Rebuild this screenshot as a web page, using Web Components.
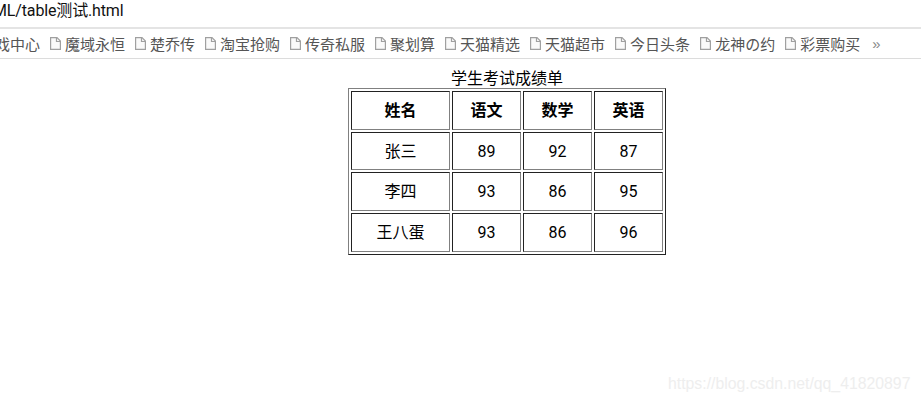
<!DOCTYPE html>
<html lang="zh">
<head>
<meta charset="utf-8">
<title>table测试</title>
<style>
  html, body { margin: 0; height: 100%; background: #fff; overflow: hidden; }
  body { position: relative; font-family: Roboto, "Noto Sans CJK SC", sans-serif; }
</style>
</head>
<body>
<address-bar>ML/table测试.html</address-bar>
<bookmark-bar>
  <bookmark-item>魔域永恒</bookmark-item>
  <bookmark-item>楚乔传</bookmark-item>
  <bookmark-item>淘宝抢购</bookmark-item>
  <bookmark-item>传奇私服</bookmark-item>
  <bookmark-item>聚划算</bookmark-item>
  <bookmark-item>天猫精选</bookmark-item>
  <bookmark-item>天猫超市</bookmark-item>
  <bookmark-item>今日头条</bookmark-item>
  <bookmark-item>龙神の约</bookmark-item>
  <bookmark-item>彩票购买</bookmark-item>
</bookmark-bar>
<score-table></score-table>
<water-mark>https://blog.csdn.net/qq_41820897</water-mark>

<script>
class AddressBar extends HTMLElement {
  constructor() {
    super();
    this.attachShadow({mode: 'open'}).innerHTML = `
  <style>
    :host {
      display: block;
      box-sizing: border-box;
      height: 29px;
      border-bottom: 2px solid #e4e4e4;
      overflow: hidden;
      white-space: nowrap;
      color: #111;
      letter-spacing: -.15px;
      font: 16px/19px Roboto, "Noto Sans CJK SC", sans-serif;
    }
    div { margin: 1px 0 0 -7px; }
  </style>
  <div><slot></slot></div>`;
  }
}

class BookmarkBar extends HTMLElement {
  constructor() {
    super();
    this.attachShadow({mode: 'open'}).innerHTML = `
  <style>
    :host {
      display: flex;
      box-sizing: border-box;
      height: 30px;
      align-items: center;
      gap: 10px;
      border-bottom: 1px solid #dcdcdc;
      overflow: hidden;
      white-space: nowrap;
      color: #555;
      font: 15px/20px "Noto Sans CJK SC", sans-serif;
    }
    .clipped { margin-left: -20px; width: 60px; flex: none; }
    .more { color: #888; margin-left: 2px; font-family: "Liberation Sans", sans-serif; }
  </style>
  <span class="clipped">游戏中心</span>
  <slot></slot>
  <span class="more">»</span>`;
  }
}

class BookmarkItem extends HTMLElement {
  constructor() {
    super();
    this.attachShadow({mode: 'open'}).innerHTML = `
  <style>
    :host { display: inline-flex; align-items: center; gap: 4px; flex: none; }
    svg { width: 11px; height: 13px; flex: none; }
  </style>
  <svg viewBox="0 0 11 13" fill="none" stroke="#a0a0a0" stroke-width="1.200">
    <path d="M.6.6h6.400l3.400 3.400v8.400h-9.800z" fill="#fafafa"/>
    <path d="M6.500.6v3.900h3.900"/>
  </svg>
  <slot></slot>`;
  }
}

class ScoreTable extends HTMLElement {
  constructor() {
    super();
    const head = ['姓名', '语文', '数学', '英语'];
    const rows = [
      ['张三', 89, 92, 87],
      ['李四', 93, 86, 95],
      ['王八蛋', 93, 86, 96]
    ];
    this.attachShadow({mode: 'open'}).innerHTML = `
  <style>
    :host {
      display: flex;
      justify-content: center;
      padding: 11px 0 0 93px;
      color: #000;
      font: 16px/18px Roboto, "Noto Sans CJK SC", sans-serif;
    }
    table { border: 1px solid; border-color: #808080 #222 #222 #808080; border-spacing: 2px; border-collapse: separate; }
    caption { line-height: 18px; }
    th, td {
      border: 1px solid;
      border-color: #222 #808080 #808080 #222;
      padding: 0;
      height: 37px;
      text-align: center;
      width: 67px;
    }
    .name { width: 97px; }
    .short td { height: 35px; padding-top: 1px; }
    .low td { height: 36px; padding-top: 1px; }
  </style>
  <table>
    <caption>学生考试成绩单</caption>
    <tr>${head.map((h, i) => `<th class="${i ? '' : 'name'}">${h}</th>`).join('')}</tr>
    ${rows.map((r, i) => `<tr class="${['short', '', 'low'][i]}">${r.map(c => `<td>${c}</td>`).join('')}</tr>`).join('')}
  </table>`;
  }
}

class WaterMark extends HTMLElement {
  constructor() {
    super();
    this.attachShadow({mode: 'open'}).innerHTML = `
  <style>
    :host {
      position: absolute;
      left: 668px;
      top: 374px;
      color: #eee;
      font: 15.800px/19px "Liberation Sans", sans-serif;
      white-space: nowrap;
    }
  </style>
  <slot></slot>`;
  }
}

customElements.define('address-bar', AddressBar);
customElements.define('bookmark-bar', BookmarkBar);
customElements.define('bookmark-item', BookmarkItem);
customElements.define('score-table', ScoreTable);
customElements.define('water-mark', WaterMark);
</script>
</body>
</html>
